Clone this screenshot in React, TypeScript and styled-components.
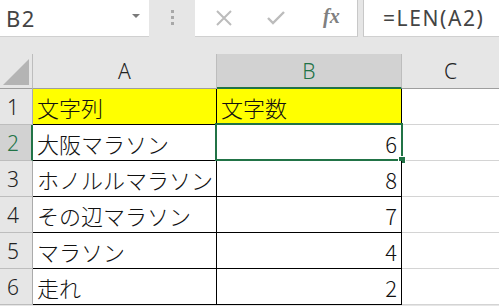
import React from "react";
import styled, { createGlobalStyle } from "styled-components";

const GlobalStyle = createGlobalStyle`
  html, body {
    margin: 0;
    padding: 0;
    background: #ffffff;
  }
  body {
    font-family: "Noto Sans CJK JP", "Noto Sans", sans-serif;
  }
`;

const rows = [
  { text: "文字列", value: "文字数", head: true },
  { text: "大阪マラソン", value: "6" },
  { text: "ホノルルマラソン", value: "8" },
  { text: "その辺マラソン", value: "7" },
  { text: "マラソン", value: "4" },
  { text: "走れ", value: "2" },
];

const App = () => {
  return (
    <Sheet>
      <GlobalStyle />
      <FormulaBar>
        <NameBox>
          <span>B2</span>
          <DropArrow />
        </NameBox>
        <Grip>
          <i />
          <i />
          <i />
        </Grip>
        <ButtonBox>
          <svg width="18" height="18" viewBox="0 0 18 18">
            <path d="M2 2 L16 16 M16 2 L2 16" stroke="#bcbcbc" strokeWidth="2" />
          </svg>
          <svg width="18" height="14" viewBox="0 0 18 14">
            <path d="M1 7 L6 12 L17 1" stroke="#bcbcbc" strokeWidth="2.4" fill="none" />
          </svg>
          <Fx>fx</Fx>
        </ButtonBox>
        <FormulaInput>=LEN(A2)</FormulaInput>
      </FormulaBar>
      <Gap />
      <Grid>
        <Corner>
          <svg width="28" height="28" viewBox="0 0 28 28">
            <polygon points="27,1 27,27 1,27" fill="#b4b4b4" />
          </svg>
        </Corner>
        <ColHead>A</ColHead>
        <ColHead $active>B</ColHead>
        <ColHead $last>C</ColHead>
        {rows.map((r, i) => (
          <React.Fragment key={i}>
            <RowHead $active={i === 1}>{i + 1}</RowHead>
            <Cell $yellow={r.head}>{r.text}</Cell>
            <Cell $yellow={r.head} $right={!r.head}>
              {r.value}
              {i === 1 && (
                <Selection>
                  <Handle />
                </Selection>
              )}
            </Cell>
            <EmptyCell />
          </React.Fragment>
        ))}
      </Grid>
    </Sheet>
  );
};

const Sheet = styled.div`
  width: 499px;
  height: 306px;
  overflow: hidden;
  background: #e6e6e6;
`;

const FormulaBar = styled.div`
  display: flex;
  height: 37px;
  background: #e6e6e6;
`;

const NameBox = styled.div`
  width: 149px;
  background: #ffffff;
  border-bottom: 1px solid #d0d0d0;
  box-sizing: border-box;
  display: flex;
  align-items: center;
  justify-content: space-between;
  padding: 0 9px 0 6px;
  font-family: "Noto Sans", "Liberation Sans", sans-serif;
  font-size: 22px;
  color: #444444;
  span {
    letter-spacing: 1.5px;
  }
`;

const DropArrow = styled.div`
  width: 0;
  height: 0;
  border-left: 4px solid transparent;
  border-right: 4px solid transparent;
  border-top: 4px solid #7a7a7a;
  margin-top: -4px;
`;

const Grip = styled.div`
  width: 46px;
  display: flex;
  flex-direction: column;
  align-items: center;
  justify-content: center;
  gap: 3px;
  padding-bottom: 3px;
  i {
    width: 3px;
    height: 3px;
    background: #a8a8a8;
  }
`;

const ButtonBox = styled.div`
  width: 163px;
  background: #ffffff;
  border-right: 1px solid #c8c8c8;
  border-bottom: 1px solid #d0d0d0;
  box-sizing: border-box;
  display: flex;
  align-items: center;
  padding: 0 0 0 20px;
  gap: 34px;
`;

const Fx = styled.span`
  font-family: "Liberation Serif", serif;
  font-style: italic;
  font-size: 20px;
  font-weight: bold;
  color: #808080;
  margin-left: 4px;
  margin-top: -4px;
`;

const FormulaInput = styled.div`
  flex: 1;
  margin-left: 5px;
  background: #ffffff;
  border-left: 1px solid #c8c8c8;
  border-bottom: 1px solid #d0d0d0;
  box-sizing: border-box;
  display: flex;
  align-items: center;
  padding-left: 19px;
  font-family: "Noto Sans", "Liberation Sans", sans-serif;
  font-size: 21px;
  letter-spacing: 1.6px;
  color: #444444;
`;

const Gap = styled.div`
  height: 17px;
  background: #e6e6e6;
`;

const Grid = styled.div`
  display: grid;
  grid-template-columns: 33px 184px 185px 97px;
  grid-template-rows: 35px repeat(6, 36px);
  background: #ffffff;
`;

const Corner = styled.div`
  background: #e6e6e6;
  border-right: 1px solid #bdbdbd;
  border-bottom: 1px solid #9e9e9e;
  display: flex;
  align-items: flex-end;
  justify-content: flex-end;
  padding: 0 2px 2px 0;
  svg {
    display: block;
  }
`;

const ColHead = styled.div<{ $active?: boolean; $last?: boolean }>`
  background: ${(p) => (p.$active ? "#d2d2d2" : "#e6e6e6")};
  color: ${(p) => (p.$active ? "#217346" : "#222222")};
  border-right: ${(p) => (p.$last ? "none" : "1px solid #bdbdbd")};
  border-bottom: ${(p) => (p.$active ? "2px solid #217346" : "1px solid #9e9e9e")};
  display: flex;
  align-items: center;
  justify-content: center;
  font-family: "Noto Sans", "Liberation Sans", sans-serif;
  font-weight: 300;
  font-size: 21px;
  padding-top: ${(p) => (p.$active ? "1px" : "0")};
`;

const RowHead = styled.div<{ $active?: boolean }>`
  background: ${(p) => (p.$active ? "#d2d2d2" : "#e6e6e6")};
  color: ${(p) => (p.$active ? "#217346" : "#222222")};
  border-right: ${(p) => (p.$active ? "2px solid #217346" : "1px solid #ababab")};
  border-bottom: 1px solid #bdbdbd;
  display: flex;
  align-items: center;
  padding-left: 7px;
  font-family: "Noto Sans", "Liberation Sans", sans-serif;
  font-weight: 300;
  font-size: 21px;
`;

const Cell = styled.div<{ $yellow?: boolean; $right?: boolean }>`
  position: relative;
  background: ${(p) => (p.$yellow ? "#ffff00" : "#ffffff")};
  border-right: 1px solid #000000;
  border-bottom: 1px solid #000000;
  display: flex;
  align-items: center;
  justify-content: ${(p) => (p.$right ? "flex-end" : "flex-start")};
  padding: 0 4px;
  font-family: "Noto Sans CJK JP", "Noto Sans", sans-serif;
  font-weight: 300;
  font-size: 22px;
  color: #111111;
  white-space: nowrap;
`;

const EmptyCell = styled.div`
  border-bottom: 1px solid #d4d4d4;
`;

const Selection = styled.div`
  position: absolute;
  left: -2px;
  top: -2px;
  right: -2px;
  bottom: -1px;
  border: 2px solid #217346;
  pointer-events: none;
`;

const Handle = styled.div`
  position: absolute;
  right: -5px;
  bottom: -5px;
  width: 6px;
  height: 6px;
  background: #217346;
  border: 1px solid #ffffff;
`;

export default App;
